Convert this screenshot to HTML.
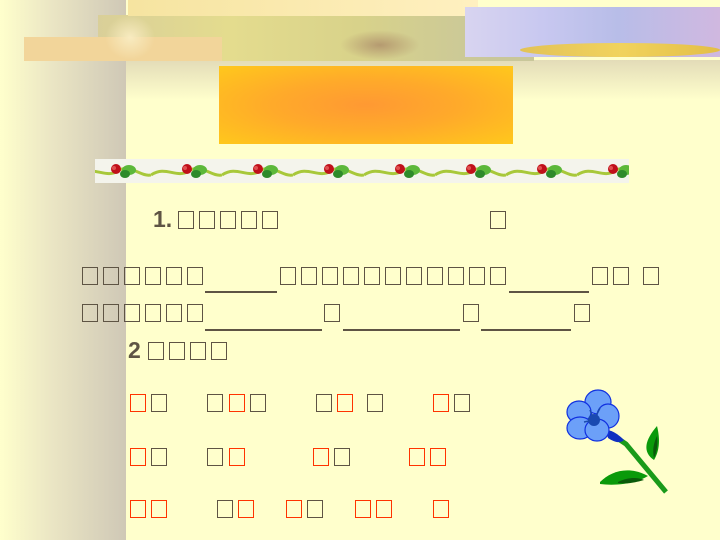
<!DOCTYPE html>
<html><head><meta charset="utf-8"><style>
html,body{margin:0;padding:0}
body{width:720px;height:540px;position:relative;overflow:hidden;background:#ffffcc;font-family:"Liberation Sans","Noto Sans CJK SC",sans-serif}
.a{position:absolute}
.b{position:absolute;width:14px;height:16px;border:1.5px solid #5e5444;box-sizing:content-box}
.r{border-color:#ff3300}
.u{position:absolute;height:2px;background:#5e5444}
.t{position:absolute;font-weight:bold;font-size:23px;color:#5e5444}
</style></head><body>
<div class="a" style="left:0;top:0;width:126px;height:540px;background:linear-gradient(90deg,#ffffcc 0%,#ebe6c4 40%,#cfc8b6 100%)"></div>
<div class="a" style="left:126px;top:60px;width:594px;height:40px;background:linear-gradient(180deg,#e3dcb8,#ffffcc)"></div>
<div class="a" style="left:98px;top:15px;width:436px;height:46px;background:linear-gradient(90deg,#d9cf99,#e4dc8e 30%,#d8d28a 60%,#c9c79a 90%)"></div>
<div class="a" style="left:128px;top:0;width:350px;height:16px;background:linear-gradient(90deg,#f6e4a0,#fff0c0)"></div>
<div class="a" style="left:24px;top:37px;width:198px;height:24px;background:#f2d59a"></div>
<div class="a" style="left:105px;top:15px;width:50px;height:45px;background:radial-gradient(ellipse,#f8ebc0,rgba(240,220,150,0) 70%)"></div>
<div class="a" style="left:340px;top:30px;width:80px;height:30px;background:radial-gradient(ellipse,#b59a70,rgba(200,180,120,0) 70%)"></div>
<div class="a" style="left:465px;top:7px;width:255px;height:50px;background:linear-gradient(90deg,#d8d4f0,#c8c8f0 30%,#b8bde8 60%,#d0b8e0)"></div>
<div class="a" style="left:520px;top:43px;width:200px;height:14px;background:linear-gradient(90deg,#e8c030,#ffd83a,#e8c020);opacity:.8;border-radius:50%"></div>
<div class="a" style="left:219px;top:66px;width:294px;height:78px;background:radial-gradient(ellipse at 50% 50%,#ff9933 0%,#ffaa2a 45%,#ffc81c 100%)"></div>
<svg class="a" style="left:95px;top:159px" width="534" height="24">
<defs><pattern id="p" width="71" height="24" patternUnits="userSpaceOnUse" x="-15">
<path d="M0 16 C15 6 25 20 38 12 C50 4 60 18 71 16" stroke="#a8c83a" stroke-width="3" fill="none"/>
<ellipse cx="49" cy="11" rx="7" ry="5" fill="#5cb83a"/><ellipse cx="45" cy="15" rx="5" ry="4" fill="#2e8a2a"/>
<circle cx="36" cy="10" r="5" fill="#c0101a"/><circle cx="34" cy="9" r="2" fill="#e05050"/>
</pattern></defs>
<rect width="534" height="24" fill="#f4f4ec"/><rect width="534" height="24" fill="url(#p)"/></svg>
<!-- line 1 -->
<div class="t" style="left:153px;top:206px">1.</div>
<span class="b" style="left:178px;top:211px"></span><span class="b" style="left:199px;top:211px"></span><span class="b" style="left:220px;top:211px"></span><span class="b" style="left:241px;top:211px"></span><span class="b" style="left:262px;top:211px"></span>
<span class="b" style="left:490px;top:211px"></span>
<!-- line 2 -->
<span class="b" style="left:82px;top:267px"></span><span class="b" style="left:103px;top:267px"></span><span class="b" style="left:124px;top:267px"></span><span class="b" style="left:145px;top:267px"></span><span class="b" style="left:166px;top:267px"></span><span class="b" style="left:187px;top:267px"></span>
<div class="u" style="left:205px;top:291px;width:72px"></div>
<span class="b" style="left:280px;top:267px"></span><span class="b" style="left:301px;top:267px"></span><span class="b" style="left:322px;top:267px"></span><span class="b" style="left:343px;top:267px"></span><span class="b" style="left:364px;top:267px"></span><span class="b" style="left:385px;top:267px"></span><span class="b" style="left:406px;top:267px"></span><span class="b" style="left:427px;top:267px"></span><span class="b" style="left:448px;top:267px"></span><span class="b" style="left:469px;top:267px"></span><span class="b" style="left:490px;top:267px"></span>
<div class="u" style="left:509px;top:291px;width:80px"></div>
<span class="b" style="left:592px;top:267px"></span><span class="b" style="left:613px;top:267px"></span><span class="b" style="left:643px;top:267px"></span>
<!-- line 3 -->
<span class="b" style="left:82px;top:304px"></span><span class="b" style="left:103px;top:304px"></span><span class="b" style="left:124px;top:304px"></span><span class="b" style="left:145px;top:304px"></span><span class="b" style="left:166px;top:304px"></span><span class="b" style="left:187px;top:304px"></span>
<div class="u" style="left:205px;top:329px;width:117px"></div>
<span class="b" style="left:324px;top:304px"></span>
<div class="u" style="left:343px;top:329px;width:117px"></div>
<span class="b" style="left:463px;top:304px"></span>
<div class="u" style="left:481px;top:329px;width:90px"></div>
<span class="b" style="left:574px;top:304px"></span>
<!-- section 2 -->
<div class="t" style="left:128px;top:337px">2</div>
<span class="b" style="left:148px;top:342px"></span><span class="b" style="left:169px;top:342px"></span><span class="b" style="left:190px;top:342px"></span><span class="b" style="left:211px;top:342px"></span>
<span class="b r" style="left:130px;top:394px"></span><span class="b" style="left:151px;top:394px"></span>
<span class="b" style="left:207px;top:394px"></span><span class="b r" style="left:229px;top:394px"></span><span class="b" style="left:250px;top:394px"></span>
<span class="b" style="left:316px;top:394px"></span><span class="b r" style="left:337px;top:394px"></span><span class="b" style="left:367px;top:394px"></span>
<span class="b r" style="left:433px;top:394px"></span><span class="b" style="left:454px;top:394px"></span>
<span class="b r" style="left:130px;top:448px"></span><span class="b" style="left:151px;top:448px"></span>
<span class="b" style="left:207px;top:448px"></span><span class="b r" style="left:229px;top:448px"></span>
<span class="b r" style="left:313px;top:448px"></span><span class="b" style="left:334px;top:448px"></span>
<span class="b r" style="left:409px;top:448px"></span><span class="b r" style="left:430px;top:448px"></span>
<span class="b r" style="left:130px;top:500px"></span><span class="b r" style="left:151px;top:500px"></span>
<span class="b" style="left:217px;top:500px"></span><span class="b r" style="left:238px;top:500px"></span>
<span class="b r" style="left:286px;top:500px"></span><span class="b" style="left:307px;top:500px"></span>
<span class="b r" style="left:355px;top:500px"></span><span class="b r" style="left:376px;top:500px"></span>
<span class="b r" style="left:433px;top:500px"></span>
<!-- flower -->
<svg class="a" style="left:550px;top:380px" width="130" height="120">
<path d="M70 60 L76 64 L116 112" stroke="#1a9a1a" stroke-width="5" fill="none"/>
<path d="M50 102 C62 90 80 86 98 96 C85 104 65 106 50 104Z" fill="#0a9a0a"/>
<path d="M68 102 C80 96 90 98 94 100 C85 103 75 104 68 103Z" fill="#0a5a0a"/>
<path d="M104 80 C92 72 95 60 107 46 C110 58 110 70 104 80Z" fill="#0a9a0a"/>
<path d="M104 78 C102 70 104 62 107 56 C108 64 107 72 104 78Z" fill="#0a5a0a"/>
<path d="M74 60 C66 52 60 50 56 50 L58 58 C64 62 70 64 74 60Z" fill="#1030c0"/>
<g fill="#6ca0f8" stroke="#1030e0" stroke-width="1.2">
<ellipse cx="48" cy="22" rx="13" ry="12"/><ellipse cx="58" cy="36" rx="11" ry="12"/>
<ellipse cx="29" cy="32" rx="12" ry="11"/><ellipse cx="30" cy="48" rx="13" ry="11"/><ellipse cx="47" cy="50" rx="12" ry="11"/></g>
<circle cx="44" cy="40" r="6" fill="#1a4ab0"/>
<path d="M44 40 L34 42 M44 40 L50 28 M44 40 L40 30" stroke="#1a4ab0" stroke-width="1.5"/>
</svg>
</body></html>
